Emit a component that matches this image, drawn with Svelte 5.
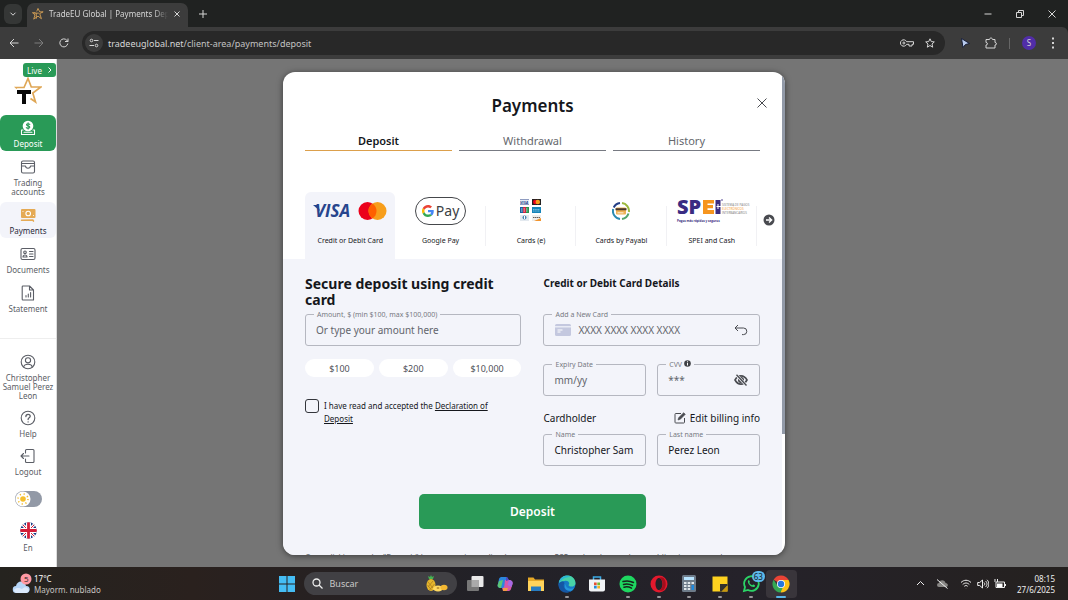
<script>
  const mainNav = [
    { id: "deposit", label: "Deposit" },
    { id: "trading", label: "Trading accounts" },
    { id: "payments", label: "Payments" },
    { id: "documents", label: "Documents" },
    { id: "statement", label: "Statement" },
  ];
  const userNav = [
    { id: "user", label: "Christopher Samuel Perez Leon" },
    { id: "help", label: "Help" },
    { id: "logout", label: "Logout" },
  ];
  const tabs = ["Deposit", "Withdrawal", "History"];
  const methods = [
    { id: "card", label: "Credit or Debit Card" },
    { id: "gpay", label: "Google Pay" },
    { id: "cards-e", label: "Cards (e)" },
    { id: "payabl", label: "Cards by Payabl" },
    { id: "spei", label: "SPEI and Cash" },
  ];
  const presets = ["100", "200", "10,000"];
  const apps = [
    { id: "taskview", name: "Task view" },
    { id: "copilot", name: "Copilot" },
    { id: "files", name: "Explorer" },
    { id: "edge", name: "Edge", running: true },
    { id: "store", name: "Store" },
    { id: "spotify", name: "Spotify", running: true },
    { id: "opera", name: "Opera", running: true },
    { id: "calc", name: "Calculator", running: true },
    { id: "notes", name: "Notes", running: true },
    { id: "whatsapp", name: "WhatsApp", running: true, badge: 63 },
    { id: "chrome", name: "Chrome", running: true, active: true },
  ];

  let activeTab = $state("Deposit");
  let method = $state("card");
  let amount = $state("");
  let accepted = $state(false);
  let dark = $state(false);
  let firstName = $state("Christopher Sam");
  let lastName = $state("Perez Leon");
</script>

{#snippet navIcon(id)}
  <svg class="nav-icon" viewBox="0 0 16 16" fill="none" stroke="currentColor" stroke-width="1.1" stroke-linecap="round" stroke-linejoin="round" aria-hidden="true">
    {#if id === "deposit"}
      <circle cx="8" cy="6" r="5.3" fill="#fff" stroke="none" />
      <path d="M9.8 4.3C8.8 3.3 6.4 3.6 6.5 4.8c.1 1.3 3.2.9 3.3 2.3.1 1.3-2.4 1.6-3.5.5M8.1 2.8v6.3" stroke="#299a57" />
      <path d="M3 10H1.5v4.5h13V10H13M4 12.2h8" />
    {:else if id === "trading"}
      <rect x="1.5" y="2" width="13" height="12" rx="1.5" />
      <path d="M1.5 4.5h13M1.5 7h4c.3 3 4.700 3 5 0h4" />
    {:else if id === "payments"}
      <rect x="1" y="2" width="14.500" height="9" rx="1" fill="#e5aa54" stroke="none" />
      <circle cx="8.200" cy="6.500" r="2.300" stroke="#fff" />
      <path d="M3 4.500v0M13.500 8.500v0" stroke="#fff" />
      <path d="M1.500 13.300l11.500-.2.500 1" stroke="#e5aa54" stroke-width="1.500" />
    {:else if id === "documents"}
      <rect x="1" y="2.500" width="14" height="11" rx="1.500" />
      <circle cx="5" cy="6.300" r="1.300" />
      <path d="M3 11c0-2.700 4-2.700 4 0zM9.500 5.500h3.500M9.500 8h3.500M9.500 10.500h3.500" />
    {:else if id === "statement"}
      <path d="M3 1h6.500L13.500 5v10H3a.8.8 0 0 1-.8-.8V1.800A.8.8 0 0 1 3 1zM9.500 1v4h4M6 12v-1.500M8.300 12V9M10.600 12V7.500" />
    {:else if id === "user"}
      <circle cx="8" cy="8" r="6.800" />
      <circle cx="8" cy="6.300" r="2.600" />
      <path d="M3.600 13c1-3.600 7.800-3.600 8.800 0" />
    {:else if id === "help"}
      <circle cx="8" cy="8" r="6.800" />
      <path d="M5.900 6.500c0-3 4.400-2.800 4.300-.2 0 1.600-2.100 1.500-2.100 3.200M8.100 11.800v.1" stroke-width="1.300" />
    {:else}
      <path d="M5.500 5V2.500c0-.6.400-1 1-1H13c.6 0 1 .4 1 1v11c0 .6-.4 1-1 1H6.500c-.6 0-1-.4-1-1V11M1 8h8M3.500 5.500L1 8l2.500 2.500" />
    {/if}
  </svg>
{/snippet}

{#snippet methodLogo(id)}
  {#if id === "card"}
    <svg width="74" height="22" viewBox="0 0 74 22" aria-hidden="true">
      <text x="2" y="17" font-size="17" font-weight="bold" font-style="italic" font-family="Open Sans, sans-serif" fill="#27458d">VISA</text>
      <path d="M0 5h5l2 6z" fill="#27458d" />
      <circle cx="54.500" cy="11" r="9" fill="#eb001b" />
      <circle cx="64.500" cy="11" r="9" fill="#f79e1b" />
      <path d="M59.500 3.500a9 9 0 0 1 0 15 9 9 0 0 1 0-15z" fill="#ff5f00" />
    </svg>
  {:else if id === "gpay"}
    <span class="gpay">
      <svg width="12" height="12" viewBox="0 0 48 48" aria-hidden="true">
        <path fill="#ea4335" d="M24 9.500c3.540 0 6.710 1.220 9.210 3.600l6.850-6.850C35.900 2.380 30.470 0 24 0 14.620 0 6.510 5.380 2.560 13.220l7.980 6.190C12.430 13.720 17.740 9.500 24 9.500z" />
        <path fill="#4285f4" d="M46.980 24.550c0-1.570-.15-3.090-.38-4.550H24v9.020h12.940c-.58 2.960-2.260 5.480-4.780 7.180l7.730 6c4.510-4.180 7.090-10.360 7.090-17.650z" />
        <path fill="#fbbc05" d="M10.530 28.590a14.500 14.500 0 0 1 0-9.180l-7.980-6.190a24 24 0 0 0 0 21.560l7.980-6.190z" />
        <path fill="#34a853" d="M24 48c6.480 0 11.930-2.130 15.890-5.810l-7.730-6c-2.150 1.450-4.920 2.300-8.160 2.300-6.260 0-11.570-4.220-13.470-9.910l-7.980 6.190C6.510 42.620 14.620 48 24 48z" />
      </svg>
      Pay
    </span>
  {:else if id === "cards-e"}
    <svg width="22" height="24" viewBox="0 0 22 24" aria-hidden="true">
      <rect x="0" y="0" width="9" height="6" fill="#e8edf5" />
      <path d="M0 .5h9M0 5.500h9" stroke="#8f9cc0" />
      <text x="0" y="5" font-size="4" font-weight="bold" font-style="italic" font-family="Open Sans, sans-serif" fill="#24448e">VISA</text>
      <rect x="12" y="0" width="9" height="6" fill="#23201f" />
      <circle cx="15.300" cy="3" r="2.300" fill="#eb001b" /><circle cx="17.800" cy="3" r="2.300" fill="#f79e1b" />
      <rect x="0" y="8" width="3" height="6" fill="#15629f" /><rect x="3" y="8" width="3" height="6" fill="#cf2340" /><rect x="6" y="8" width="3" height="6" fill="#26924d" />
      <path d="M1 12h7M1 10h7" stroke="#fff" stroke-width=".7" stroke-dasharray="1.500 1" />
      <rect x="12" y="8" width="9" height="6" fill="#1684b9" /><path d="M13 10.500h7M13 12h7" stroke="#a5d8ee" stroke-width=".7" stroke-dasharray="1.500 .7" />
      <rect x="0" y="16" width="9" height="6" fill="#e3e9ef" /><circle cx="4.500" cy="18.500" r="2" fill="#4c87b1" /><path d="M4.500 17v3" stroke="#fff" />
      <rect x="12" y="16" width="9" height="6" fill="#eeeeec" /><path d="M13 18.500h7" stroke="#655e5b" stroke-dasharray="1.500 .5" /><path d="M21 19v3h-7z" fill="#f2942d" />
    </svg>
  {:else if id === "payabl"}
    <svg width="18" height="18" viewBox="0 0 18 18" fill="none" stroke-width="2" aria-hidden="true">
      <path d="M8 1a8 8 0 0 0-6.300 4.500" stroke="#243f86" />
      <path d="M1.200 7A8 8 0 0 0 8 17" stroke="#2b8ab2" />
      <path d="M10 1a8 8 0 0 1 6.900 9" stroke="#9cb83c" />
      <path d="M16.500 11.500A8 8 0 0 1 10 17" stroke="#55a66b" />
      <rect x="4" y="5.500" width="10" height="7" rx="1" fill="#efb253" />
      <path d="M3.500 7.200h11" stroke="#47362a" /><path d="M5.500 10.800h6" stroke="#fff" stroke-width=".8" />
    </svg>
  {:else}
    <svg width="76" height="26" viewBox="0 0 76 26" font-family="Open Sans, sans-serif" font-weight="bold" aria-hidden="true">
      <text x="3" y="16" font-size="20" font-weight="800" fill="#3a2c82">SP</text>
      <path d="M29 2h11v3.500h-6.500V7H39v3.200h-5.500V12H40v4H29z" fill="#f6951e" />
      <path d="M41.500 2h5v14h-5z" fill="#3a2c82" /><path d="M44 6v5M42.500 8.500h5" stroke="#fff" fill="none" />
      <circle cx="48" cy="2" r=".8" fill="#3a2c82" />
      <text x="3" y="24" font-size="3" fill="#3a2c82">Pagos más rápidos y seguros</text>
      <g font-size="3" font-weight="normal"><text x="48" y="8" fill="#777">SISTEMA DE PAGOS</text><text x="48" y="12" fill="#f6951e">ELECTRÓNICOS</text><text x="48" y="16" fill="#777">INTERBANCARIOS</text></g>
    </svg>
  {/if}
{/snippet}

{#snippet appIcon(id)}
  <svg width="18" height="18" viewBox="0 0 18 18" fill="none" aria-hidden="true">
    {#if id === "taskview"}
      <rect x="5.500" y="1" width="12" height="11" rx="1" fill="#e9e9e9" />
      <rect x="1" y="5" width="12" height="11" rx="1" fill="#777" /><path d="M5.500 5H13v7H5.500z" fill="#aaa" />
    {:else if id === "copilot"}
      <path d="M6 2h5l2 4-3 7H5c-3 0-4-2-3-4l1-5c.5-1.500 1.500-2 3-2z" fill="#2a86dd" />
      <path d="M3 6l4-1-2 8c-3 0-4-2-3-4z" fill="#5cc675" />
      <path d="M9 5h4c3 0 4 2 3.500 4L15 14c-.5 1.500-1.500 2-3 2H7l-1-3c2 0 2-1 2.300-2z" fill="#d657a8" />
      <path d="M7 13h5l-1 3H7z" fill="#f39b45" /><path d="M10 2c2 0 2 2 3 3l-3 1z" fill="#5049c5" />
      <path d="M13 5c3 0 4 2 3.500 4l-1 3-4-2z" fill="#a66ae5" />
    {:else if id === "files"}
      <path d="M1 2.500h5.500L8 4.500h9v11H1z" fill="#e6a927" /><path d="M1 6h16v10H1z" fill="#ffd35b" /><path d="M4 16v-4.500h10V16z" fill="#277cc1" />
    {:else if id === "edge"}
      <circle cx="9" cy="9" r="8.500" fill="#167ac6" />
      <path d="M1 8C2-2 17-2 17.500 8c.2 4-6 4.500-7 2 2-2-.5-5-4-4C3 6 1 8 1 8z" fill="#48d3a6" />
      <path d="M1 8C1.500 2 8-.5 13 2 7 2 4 4 1 8z" fill="#2ab6d8" />
      <path d="M6.500 8C4 12 8 17 14 15.500 9 20 0 17 .5 9 2 6 6 5.500 6.500 8z" fill="#1556a4" />
      <path d="M8 9c-1 3 3 6 8 4l-2 2.500C7 17 5.500 12 8 9z" fill="#2496dd" />
    {:else if id === "store"}
      <path d="M5.500 5V2h7v3" stroke="#3cabe5" stroke-width="1.500" /><path d="M1 4.500h16v10a2 2 0 0 1-2 2H3a2 2 0 0 1-2-2z" fill="#f1f3f6" />
      <path d="M6 7.500h2.700v2.700H6z" fill="#e74f31" /><path d="M9.300 7.500H12v2.700H9.300z" fill="#77b72f" /><path d="M6 10.800h2.700v2.700H6z" fill="#238cd8" /><path d="M9.300 10.800H12v2.700H9.300z" fill="#f2b526" />
    {:else if id === "spotify"}
      <circle cx="9" cy="9" r="8.500" fill="#1ed760" />
      <path d="M4 6.500c4-1.200 7-.8 10.500 1M4.500 9.500c3.300-1 6-.5 9 1M5 12.200c2.500-.7 5-.4 7.500.9" stroke="#17241b" stroke-width="1.500" stroke-linecap="round" />
    {:else if id === "opera"}
      <path fill-rule="evenodd" d="M9 .5a8.500 8.500 0 1 0 0 17 8.500 8.500 0 0 0 0-17zM9 3c2 0 3.500 2.700 3.500 6S11 15 9 15s-3.500-2.700-3.500-6S7 3 9 3z" fill="#e3192d" />
      <path d="M9 3c1-1 3-1 4.500 0 3 3 3 9 0 12-1.500 1-3.500 1-4.500 0 5-1 5-11 0-12z" fill="#a50d1c" />
    {:else if id === "calc"}
      <rect x="2" y="0" width="14" height="17" rx="1.500" fill="#6e7b89" /><path d="M4 2h10v3H4z" fill="#b8e4ff" />
      <path d="M4 7h2.500v2H4zM7.700 7h2.500v2H7.700zM11.500 7H14v2h-2.500zM4 10h2.500v2H4zM7.700 10h2.500v2H7.700zM4 13h2.500v2H4zM7.700 13h2.500v2H7.700z" fill="#e1e7eb" /><path d="M11.500 10H14v5h-2.500z" fill="#2089dd" />
    {:else if id === "notes"}
      <path d="M1.500 1.500h15v15h-15z" fill="#ffd21f" /><path d="M9 9h7.500v1.500L11 16.500H9z" fill="#33322c" /><path d="M16.500 10.500v6h-6z" fill="#c9980f" />
    {:else if id === "whatsapp"}
      <path d="M2 16l1-4a7.300 7.300 0 1 1 3 3z" stroke="#2bd366" stroke-width="1.800" /><path d="M6 5.500c-1 3 3 7 6 6.500 1.500-.5 1.500-1.500 0-2.200-1.500-.7-1 .9-2.300.2C8 9 7 8 7.600 7.200 8.300 6.300 7 4.500 6 5.500z" fill="#2bd366" />
    {:else}
      <path d="M9 9L1.600 4.700A8.500 8.500 0 0 1 16.500 5z" fill="#ea4335" /><path d="M9 9l7.400-4.200A8.500 8.500 0 0 1 8.700 17.500z" fill="#fbc116" /><path d="M9 9l2 3-2.500 5.500A8.500 8.500 0 0 1 1.600 4.700L5.700 11z" fill="#34a853" />
      <path d="M9 5h7.500l-3 4z" fill="#fbc116" /><circle cx="9" cy="9" r="4" fill="#fff" /><circle cx="9" cy="9" r="3.200" fill="#2677dd" />
    {/if}
  </svg>
{/snippet}

<div class="screen">
  <header class="browser">
    <div class="tab-strip">
      <button class="tab-search" aria-label="Search tabs"><svg width="8" height="8" viewBox="0 0 8 8"><path d="M1.500 2.700L4 5.200l2.500-2.500" /></svg></button>
      <div class="browser-tab">
        <svg class="favicon" width="12" height="12" viewBox="0 0 28 28"><path d="M8 11H1l6 5-3 10 10-7 8 6-4-12 8-4h-8L14 1l-3 7M5 12h11M10 12v13" /></svg>
        <span class="tab-title">TradeEU Global | Payments Dep</span>
        <button aria-label="Close tab"><svg width="8" height="8" viewBox="0 0 8 8"><path d="M1.500 1.500l5 5M6.500 1.500l-5 5" /></svg></button>
      </div>
      <button aria-label="New tab"><svg width="10" height="10" viewBox="0 0 10 10"><path d="M5 1v8M1 5h8" /></svg></button>
      <div class="window-controls">
        <button aria-label="Minimize"><svg width="8" height="8" viewBox="0 0 8 8"><path d="M.5 4h7" /></svg></button>
        <button aria-label="Restore"><svg width="8" height="8" viewBox="0 0 8 8"><path d="M.5 2.500h5v5h-5zM2.500 2.500v-2h5v5h-2" /></svg></button>
        <button aria-label="Close window"><svg width="8" height="8" viewBox="0 0 8 8"><path d="M.5.5l7 7M7.500.5l-7 7" /></svg></button>
      </div>
    </div>
    <div class="toolbar">
      <div class="nav-buttons">
        <button aria-label="Back"><svg width="10" height="10" viewBox="0 0 10 10"><path d="M9.500 5H1M5 1L1 5l4 4" /></svg></button>
        <button class="faded" aria-label="Forward"><svg width="10" height="10" viewBox="0 0 10 10"><path d="M.5 5H9M5 1l4 4-4 4" /></svg></button>
        <button aria-label="Reload"><svg width="10" height="10" viewBox="0 0 10 10"><path d="M8.800 5.500A4 4 0 1 1 7.800 2.200L9 3.500M9 .5v3H6" /></svg></button>
      </div>
      <div class="address">
        <span class="site-info"><svg width="10" height="10" viewBox="0 0 10 10"><circle cx="2.500" cy="2.500" r="1.300" /><circle cx="7.500" cy="7.500" r="1.300" /><path d="M5 2.500h4.500M.5 7.500H5" /></svg></span>
        <span class="url">tradeeuglobal.net<span>/client-area/payments/deposit</span></span>
        <button aria-label="Passwords"><svg width="14" height="10" viewBox="0 0 14 10"><path d="M6.600 3.700A3.200 3.200 0 1 0 6.600 6.300H9V8h3V6.300h1.500V3.700z" /><circle cx="3.900" cy="5" r="1" /></svg></button>
        <button aria-label="Bookmark"><svg width="10" height="10" viewBox="0 0 10 10"><path d="M5 .8l1.300 2.800 3 .3L7 6l.7 3.200L5 7.500 2.300 9.200 3 6 .7 3.900l3-.3z" /></svg></button>
      </div>
      <button aria-label="Cursor extension"><svg width="10" height="10" viewBox="0 0 10 10"><path d="M1.500.5l8 5-4 1-2.500 3z" fill="#b8cbee" stroke="#161d38" /></svg></button>
      <button aria-label="Extensions"><svg width="12" height="12" viewBox="0 0 12 12"><path d="M1 2.500h3.500c0-2 3-2 3 0H10V5.500c2 0 2 2.500 0 2.500v3H1V8c2 0 2-2.500 0-2.500z" /></svg></button>
      <span class="toolbar-divider"></span>
      <button class="avatar" aria-label="Profile">S</button>
      <button aria-label="Menu"><svg width="4" height="12" viewBox="0 0 4 12"><path d="M1 1.500h2M1 6h2M1 10.500h2" stroke-width="2" /></svg></button>
    </div>
  </header>

  <div class="page">
    <aside class="sidebar">
      <button class="live">Live <svg width="4" height="8" viewBox="0 0 4 8"><path d="M.5 1.500L3 4 .5 6.500" /></svg></button>
      <a class="brand" href="#home" aria-label="TradeEU Global">
        <svg width="28" height="28" viewBox="0 0 28 28" fill="none">
          <path d="M3 11.500l-1-1h8L14 1.500l3.300 8.500h9.500l-8 6 2.700 9-5-3.500" stroke="#dfa756" stroke-width="1.700" />
          <path d="M3 13h14v4h-5v10H8V17H3z" fill="#080808" />
        </svg>
      </a>
      <nav class="nav-group" aria-label="Main">
        {#each mainNav as item}
          <a class="nav-item {item.id}" href="#{item.id}">{@render navIcon(item.id)}<span>{item.label}</span></a>
        {/each}
      </nav>
      <div class="nav-group account">
        {#each userNav as item}
          <a class="nav-item" href="#{item.id}">{@render navIcon(item.id)}<span>{item.label}</span></a>
        {/each}
      </div>
      <label class="theme">
        <input type="checkbox" bind:checked={dark} aria-label="Dark theme" />
        <svg width="16" height="16" viewBox="0 0 16 16"><circle cx="8" cy="8" r="7.500" fill="#fff" /><circle cx="8" cy="8" r="2.800" fill="#f4be2d" /><circle cx="8" cy="8" r="5" fill="none" stroke="#f4be2d" stroke-width="1.500" stroke-dasharray="1.200 2.730" /></svg>
      </label>
      <button class="language">
        <svg width="17" height="17" viewBox="0 0 17 17">
          <clipPath id="round"><circle cx="8.500" cy="8.500" r="8.300" /></clipPath>
          <g clip-path="url(#round)"><path d="M0 0h17v17H0z" fill="#173b84" /><path d="M0 0l17 17M17 0L0 17" stroke="#fff" stroke-width="3" /><path d="M0 0l17 17M17 0L0 17" stroke="#d31d38" /><path d="M8.500 0v17M0 8.500h17" stroke="#fff" stroke-width="5" /><path d="M8.500 0v17M0 8.500h17" stroke="#d31d38" stroke-width="2.800" /></g>
        </svg>
        En
      </button>
    </aside>

    <div class="overlay">
      <div class="modal" role="dialog" aria-labelledby="modal-title">
        <div class="modal-scroll">
          <div class="modal-head">
            <h1 id="modal-title">Payments</h1>
            <button class="close" aria-label="Close"><svg width="10" height="10" viewBox="0 0 10 10"><path d="M.5.5l9 9M9.500.5l-9 9" /></svg></button>
          </div>
          <div class="tabs" role="tablist">
            {#each tabs as tab}
              <button role="tab" class:active={activeTab === tab} aria-selected={activeTab === tab} onclick={() => (activeTab = tab)}>{tab}</button>
            {/each}
          </div>
          <div class="methods">
            {#each methods as m}
              <button class="method" class:selected={method === m.id} onclick={() => (method = m.id)}>
                <span class="method-logo">{@render methodLogo(m.id)}</span>
                <span>{m.label}</span>
              </button>
            {/each}
            <button class="more" aria-label="More methods"><svg width="12" height="12" viewBox="0 0 12 12"><circle cx="6" cy="6" r="5.500" fill="#494b50" /><path d="M3 6h5.500M6 3.500L8.700 6 6 8.500" fill="none" stroke="#fff" stroke-width="1.300" /></svg></button>
          </div>

          <form class="deposit-form" onsubmit={(e) => e.preventDefault()}>
            <div class="columns">
              <section>
                <h2>Secure deposit using credit card</h2>
                <label class="field">
                  <span class="field-label">Amount, $ (min $100, max $100,000)</span>
                  <input bind:value={amount} placeholder="Or type your amount here" />
                </label>
                <div class="presets">
                  {#each presets as p}
                    <button type="button" onclick={() => (amount = p)}>${p}</button>
                  {/each}
                </div>
                <div class="terms">
                  <input id="terms" type="checkbox" bind:checked={accepted} />
                  <label for="terms">I have read and accepted the <a href="#declaration">Declaration of Deposit</a></label>
                </div>
              </section>
              <section>
                <h3>Credit or Debit Card Details</h3>
                <label class="field card-number">
                  <span class="field-label">Add a New Card</span>
                  <svg width="18" height="14" viewBox="0 0 18 14"><rect x="1" y="1" width="16" height="12" rx="1.500" fill="#c4c8df" /><path d="M1 3.800h16" stroke="#f3f4fa" stroke-width="1.200" /><path d="M3.500 7h5M3.500 9h3" stroke="#fff" /></svg>
                  <input placeholder="XXXX XXXX XXXX XXXX" />
                  <svg class="line-icon" width="14" height="12" viewBox="0 0 14 12"><path d="M4 1L1 4l3 3M1 4h8.500a3.300 3.300 0 0 1 0 6.600H8" /></svg>
                </label>
                <div class="pair">
                  <label class="field">
                    <span class="field-label">Expiry Date</span>
                    <input placeholder="mm/yy" />
                  </label>
                  <label class="field">
                    <span class="field-label">CVV <svg width="7" height="7" viewBox="0 0 7 7"><circle cx="3.500" cy="3.500" r="3.300" fill="#3f4146" /><path d="M3.500 1.300v1M3.500 3v2.500" stroke="#fff" /></svg></span>
                    <input placeholder="***" />
                    <svg class="line-icon" width="14" height="12" viewBox="0 0 14 12"><path d="M1 6c3-5.500 9-5.500 12 0-3 5.500-9 5.500-12 0z" stroke-width="1.600" /><circle cx="7" cy="6" r="2.600" fill="#494b50" /><path d="M2 .5l10.500 11" stroke="#f3f4fa" stroke-width="2.800" /><path d="M2.500.8l10 10.700" stroke-width="1.400" /></svg>
                  </label>
                </div>
                <div class="holder">
                  <span>Cardholder</span>
                  <button type="button"><svg class="line-icon" width="12" height="12" viewBox="0 0 12 12"><path d="M7 1.500H1.800a.8.8 0 0 0-.8.800v8c0 .4.400.7.800.7h8c.4 0 .7-.3.700-.7V6" /><path d="M4 8l.6-2.300L9.700.7l1.600 1.600-5 5z" fill="#494b50" stroke-width=".6" /></svg> Edit billing info</button>
                </div>
                <div class="pair">
                  <label class="field"><span class="field-label">Name</span><input bind:value={firstName} /></label>
                  <label class="field"><span class="field-label">Last name</span><input bind:value={lastName} /></label>
                </div>
              </section>
            </div>
            <button class="submit">Deposit</button>
            <p class="notice">Once clicking on the "Deposit" button you immediately consent to PSP and understand your obligations towards your card provider.</p>
          </form>
        </div>
        <div class="track"><div class="thumb"></div></div>
      </div>
    </div>
  </div>

  <footer class="taskbar">
    <div class="weather">
      <svg width="20" height="22" viewBox="0 0 20 22"><path d="M4.500 20a3.500 3.500 0 0 1-.5-7c1-6 9-6 10 0 5-.5 5 7 0 7z" fill="#b6d5f8" /><path d="M2 17c2-3 6-2 8-1 3-3 6-2 7 1-.5 2-2 3-3 3H5c-2 0-3-1.500-3-3z" fill="#dceafd" /><circle cx="14" cy="6" r="5.500" fill="#ff99a4" /><text x="12" y="9" font-size="8" font-family="Open Sans, sans-serif" fill="#222">5</text></svg>
      <span><b>17°C</b><br />Mayorm. nublado</span>
    </div>
    <div class="task-center">
      <button aria-label="Start"><svg width="16" height="16" viewBox="0 0 16 16"><path d="M0 0h7.500v7.500H0zM8.500 0H16v7.500H8.500zM0 8.500h7.500V16H0zM8.500 8.500H16V16H8.500z" fill="#45bdf4" /></svg></button>
      <label class="search">
        <svg width="11" height="11" viewBox="0 0 11 11"><circle cx="4.500" cy="4.500" r="3.500" /><path d="M7 7l3.500 3.500" /></svg>
        <input placeholder="Buscar" aria-label="Buscar" />
        <svg width="22" height="17" viewBox="0 0 22 17"><path d="M2 1l2 1 1-2 1 2 2-1-1 3H3z" fill="#44b253" /><ellipse cx="5" cy="10" rx="4.500" ry="6" fill="#e6b62b" /><path d="M2 7l5 6M1.500 10l4 5M7 6l-5 6M8.500 9l-5 6" stroke="#a57923" stroke-width=".7" /><ellipse cx="12" cy="13.500" rx="5" ry="3" fill="#ffd960" /><ellipse cx="18" cy="12.500" rx="3.500" ry="2.800" fill="#f4b832" /><ellipse cx="12" cy="13" rx="1.500" ry=".8" fill="#a87823" /></svg>
      </label>
      <div class="apps">
        {#each apps as app}
          <button class="app" class:active={app.active} class:running={app.running} aria-label={app.name}>
            {@render appIcon(app.id)}
            {#if app.badge}<span class="badge">{app.badge}</span>{/if}
          </button>
        {/each}
      </div>
    </div>
    <div class="tray">
      <svg width="9" height="9" viewBox="0 0 9 9"><path d="M1 6l3.500-3.500L8 6" /></svg>
      <svg width="13" height="10" viewBox="0 0 13 10"><path d="M3 8a2 2 0 0 1 0-4c1-4 6-3 6.500 0 3 0 3 4 .5 4z" fill="#898785" stroke="none" /><path d="M1 .5l10.500 9" /></svg>
      <svg width="12" height="10" viewBox="0 0 12 10"><path d="M1 3.500c3-3 7-3 10 0M2.700 5.500c2-2 4.600-2 6.600 0M4.300 7.300c1-1 2.400-1 3.400 0M6 9v.2" /></svg>
      <svg width="12" height="10" viewBox="0 0 12 10"><path d="M.7 3.500h2L5.500 1v8L2.700 6.500h-2zM7 3.500c1 1 1 2 0 3M8.500 2c2 2 2 4 0 6M10 .8c2.500 2.500 2.500 6 0 8.400" /></svg>
      <svg width="12" height="10" viewBox="0 0 12 10"><path d="M2 3h8.500v5.500H2zM11.500 5v2M1 0v3M3.500 0v3" /><path d="M3 4.500h5.500V8H3z" fill="#fff" stroke="none" /></svg>
      <time>08:15<br />27/6/2025</time>
    </div>
  </footer>
</div>

<style>
  :global(body) {
    margin: 0;
    font-family: "Noto Sans", "Open Sans", sans-serif;
    color: #15171c;
  }
  button,
  input {
    font: inherit;
    color: inherit;
    background: none;
    border: 0;
    padding: 0;
    margin: 0;
    min-width: 0;
  }
  button {
    cursor: pointer;
  }
  svg {
    flex-shrink: 0;
  }
  a {
    color: inherit;
  }
  .screen {
    height: 100vh;
    display: flex;
    flex-direction: column;
    overflow: hidden;
  }

  /* browser */
  .browser {
    background: #202221;
    color: #d6d6d6;
    font-size: 8px;
  }
  .browser svg,
  .tray svg {
    display: block;
    fill: none;
    stroke: currentColor;
  }
  .tab-strip {
    height: 27px;
    display: flex;
    align-items: center;
    gap: 10px;
    padding: 0 12px 0 4px;
    box-sizing: border-box;
  }
  .tab-search {
    width: 18px;
    height: 20px;
    border-radius: 6px;
    background: #353736;
    display: grid;
    place-items: center;
    margin-right: -5px;
  }
  .browser-tab {
    align-self: flex-end;
    width: 161px;
    height: 24px;
    box-sizing: border-box;
    display: flex;
    align-items: center;
    gap: 5px;
    padding: 0 7px 3px 5px;
    border-radius: 7px 7px 0 0;
    background: #3c3c3c;
  }
  .browser-tab .favicon {
    stroke: #dca557;
    stroke-width: 2;
  }
  .tab-title {
    flex: 1;
    white-space: nowrap;
    overflow: hidden;
    mask-image: linear-gradient(90deg, #000 88%, transparent);
  }
  .window-controls {
    margin-left: auto;
    display: flex;
    gap: 24px;
  }
  .toolbar {
    height: 32px;
    box-sizing: border-box;
    display: flex;
    align-items: center;
    gap: 15px;
    padding: 0 13px 0 9px;
    background: #3c3c3c;
    border-radius: 0 6px 0 0;
  }
  .nav-buttons {
    display: flex;
    gap: 15px;
    margin-right: -2px;
  }
  .faded {
    color: #7d7d7d;
  }
  .address {
    flex: 1;
    height: 24px;
    display: flex;
    align-items: center;
    gap: 11px;
    padding: 0 10px 0 3px;
    border-radius: 12px;
    background: #282828;
    font-size: 9px;
  }
  .site-info {
    width: 18px;
    height: 18px;
    border-radius: 9px;
    display: grid;
    place-items: center;
    background: #3c3c3c;
    margin-right: -6px;
  }
  .url {
    flex: 1;
  }
  .url span {
    color: #c2c2c2;
  }
  .toolbar-divider {
    width: 1px;
    height: 11px;
    background: #666;
    margin: 0 -3px;
  }
  .avatar {
    width: 14px;
    height: 14px;
    border-radius: 7px;
    background: #512da8;
    font-size: 8px;
    line-height: 14px;
  }

  /* sidebar */
  .page {
    flex: 1;
    min-height: 0;
    position: relative;
    display: flex;
    background: #757575;
  }
  .sidebar {
    width: 57px;
    flex-shrink: 0;
    box-sizing: border-box;
    border-right: 1px solid #ddd;
    background: #fff;
    display: flex;
    flex-direction: column;
    align-items: center;
    padding-top: 4px;
    font-size: 8px;
    line-height: 9px;
    color: #5b5e66;
  }
  .live {
    align-self: flex-end;
    width: 33px;
    height: 14px;
    display: flex;
    align-items: center;
    justify-content: center;
    gap: 6px;
    border-radius: 3px;
    background: #299a57;
    color: #fff;
  }
  .live svg {
    fill: none;
    stroke: #fff;
  }
  .brand {
    height: 28px;
    margin-bottom: 10px;
  }
  .nav-group {
    width: 100%;
    display: flex;
    flex-direction: column;
    gap: 3px;
  }
  .account {
    gap: 2px;
    margin-top: 22px;
    padding-top: 10px;
    border-top: 1px solid #eee;
  }
  .nav-item {
    display: flex;
    flex-direction: column;
    align-items: center;
    gap: 3px;
    padding: 5px 0 3px;
    text-align: center;
    text-decoration: none;
    border-radius: 6px;
  }
  .nav-icon {
    width: 16px;
    height: 16px;
  }
  .nav-item.deposit {
    background: #299a57;
    color: #fff;
  }
  .nav-item.payments {
    background: #f3f4fa;
    color: #292b3a;
  }
  .theme {
    width: 27px;
    height: 16px;
    border-radius: 8px;
    background: #9299a6;
    margin-top: 12px;
  }
  .theme input {
    position: absolute;
    opacity: 0;
  }
  .theme svg {
    display: block;
  }
  .language {
    margin-top: 15px;
    display: flex;
    flex-direction: column;
    align-items: center;
    gap: 4px;
  }

  /* modal */
  .overlay {
    position: absolute;
    inset: 0;
    display: flex;
    justify-content: center;
    padding: 13px 0 12px;
    pointer-events: none;
  }
  .modal {
    width: 47%;
    min-width: 400px;
    display: flex;
    border-radius: 12px;
    overflow: hidden;
    background: #fff;
    box-shadow: 0 1px 6px rgba(0, 0, 0, 0.5);
    pointer-events: auto;
  }
  .modal-scroll {
    flex: 1;
    min-width: 0;
    overflow: hidden;
  }
  .track {
    width: 3px;
  }
  .thumb {
    height: 75%;
    background: #929aa8;
  }
  .modal-head {
    position: relative;
    padding: 22px 0 16px;
    text-align: center;
  }
  h1 {
    margin: 0;
    font-size: 17px;
    line-height: 24px;
    font-weight: 600;
  }
  .close {
    position: absolute;
    top: 26px;
    right: 15px;
  }
  .close svg {
    display: block;
    stroke: #494b50;
  }
  .tabs {
    display: grid;
    grid-template-columns: repeat(3, 1fr);
    gap: 7px;
    padding: 0 22px;
    margin-bottom: 41px;
  }
  .tabs button {
    font-size: 11px;
    line-height: 14px;
    padding-bottom: 2px;
    color: #65676d;
    border-bottom: 1px solid #777a82;
  }
  .tabs .active {
    font-weight: 600;
    color: #15171c;
    border-color: #dca04c;
  }
  .methods {
    display: flex;
    padding-left: 22px;
  }
  .method {
    flex: 1;
    height: 67px;
    display: flex;
    flex-direction: column;
    align-items: center;
    font-size: 7px;
    line-height: 10px;
    white-space: nowrap;
    background: linear-gradient(#f1f1f4, #f1f1f4) right 14px / 1px 40px no-repeat;
  }
  .method.selected {
    background: #f3f4fa;
    border-radius: 6px 6px 0 0;
  }
  .method-logo {
    height: 38px;
    margin-bottom: 6px;
    display: grid;
    place-items: center;
  }
  .gpay {
    box-sizing: border-box;
    height: 28px;
    padding: 0 6px;
    display: flex;
    align-items: center;
    gap: 2px;
    border: 1px solid #45474b;
    border-radius: 14px;
    font-size: 14px;
    line-height: 26px;
    color: #3c4043;
  }
  .more {
    width: 25px;
    margin-top: -12px;
  }

  /* form */
  .deposit-form {
    background: #f3f4fa;
    padding: 17px 22px;
    display: flex;
    flex-direction: column;
  }
  .columns {
    display: grid;
    grid-template-columns: 1fr 1fr;
    gap: 22px;
  }
  h2 {
    margin: 0 0 6px;
    font-size: 14px;
    line-height: 16px;
  }
  h3 {
    margin: 0 0 23px;
    font-size: 10px;
    line-height: 15px;
  }
  .field {
    position: relative;
    height: 32px;
    box-sizing: border-box;
    display: flex;
    align-items: center;
    gap: 6px;
    padding: 0 11px 0 10px;
    border: 1px solid #b5b7c0;
    border-radius: 3px;
    font-size: 10px;
  }
  .field input {
    flex: 1;
    width: 0;
    outline: 0;
  }
  .field input::placeholder {
    color: #62656c;
    opacity: 1;
  }
  .field-label {
    position: absolute;
    top: -5px;
    left: 8px;
    padding: 0 3px;
    background: #f3f4fa;
    font-size: 7px;
    line-height: 10px;
    color: #777a82;
    white-space: nowrap;
  }
  .line-icon {
    fill: none;
    stroke: #494b50;
  }
  .presets {
    display: grid;
    grid-template-columns: repeat(3, 1fr);
    gap: 5px;
    margin: 13px 0 22px;
  }
  .presets button {
    height: 18px;
    border-radius: 9px;
    background: #fff;
    font-size: 9px;
    color: #4f5259;
  }
  .terms {
    display: flex;
    align-items: flex-start;
    gap: 5px;
    padding-right: 22px;
    font-size: 8px;
    line-height: 13px;
  }
  .terms input {
    appearance: none;
    flex-shrink: 0;
    width: 14px;
    height: 14px;
    border: 1px solid #33353b;
    border-radius: 3px;
  }
  .terms input:checked {
    background: #299a57;
  }
  .pair {
    display: grid;
    grid-template-columns: 1fr 1fr;
    gap: 11px;
  }
  .card-number {
    margin-bottom: 18px;
  }
  .holder {
    display: flex;
    justify-content: space-between;
    align-items: center;
    height: 15px;
    margin: 14px 0 9px;
    font-size: 10px;
  }
  .holder button {
    display: flex;
    align-items: center;
    gap: 4px;
  }
  .submit {
    align-self: center;
    width: 50%;
    height: 35px;
    margin: 28px 0 23px;
    border-radius: 5px;
    background: #299a57;
    color: #fff;
    font-size: 12px;
    font-weight: 600;
  }
  .notice {
    margin: 0;
    font-size: 8px;
    line-height: 12px;
    color: #62656c;
  }

  /* taskbar */
  .taskbar {
    height: 33px;
    flex-shrink: 0;
    display: grid;
    grid-template-columns: 1fr auto 1fr;
    align-items: center;
    background: linear-gradient(90deg, #25231f, #2a211e 18%, #222127 45%, #25222a 70%, #25211f);
    color: #eee;
    font-size: 8px;
    line-height: 11px;
  }
  .weather {
    display: flex;
    align-items: center;
    gap: 2px;
    padding-left: 12px;
  }
  .weather span {
    color: #c8c5c2;
  }
  .weather b {
    font-weight: 400;
    color: #fff;
  }
  .task-center {
    display: flex;
    align-items: center;
    gap: 9px;
    margin-left: 7px;
  }
  .task-center svg {
    display: block;
  }
  .search {
    width: 153px;
    height: 23px;
    box-sizing: border-box;
    display: flex;
    align-items: center;
    gap: 7px;
    padding: 0 9px 0 8px;
    border-radius: 12px;
    background: #414044;
    font-size: 9px;
  }
  .search svg:first-child {
    fill: none;
    stroke: #eee;
    stroke-width: 1.3;
  }
  .search input {
    flex: 1;
    width: 0;
  }
  .search input::placeholder {
    color: #c9c9c9;
    opacity: 1;
  }
  .apps {
    width: 337px;
    margin-left: -6px;
    display: grid;
    grid-template-columns: repeat(11, 1fr);
  }
  .app {
    position: relative;
    height: 28px;
    display: grid;
    place-items: center;
    border-radius: 4px;
  }
  .app.active {
    background: #39353b;
  }
  .app.running::after {
    content: "";
    position: absolute;
    bottom: 0;
    left: 50%;
    width: 4px;
    height: 2px;
    margin-left: -2px;
    border-radius: 1px;
    background: #99979b;
  }
  .app.active::after {
    width: 10px;
    margin-left: -5px;
    background: #58b5e8;
  }
  .badge {
    position: absolute;
    top: 1px;
    right: 1px;
    padding: 0 2px;
    border-radius: 6px;
    background: #5db9eb;
    color: #12232e;
    font-size: 8px;
    line-height: 11px;
  }
  .tray {
    display: flex;
    justify-content: flex-end;
    align-items: center;
    gap: 5px;
    padding-right: 13px;
  }
  .tray svg:first-child,
  .tray svg:nth-child(2) {
    margin-right: 6px;
  }
  .tray time {
    margin-left: 6px;
    text-align: right;
  }
</style>
